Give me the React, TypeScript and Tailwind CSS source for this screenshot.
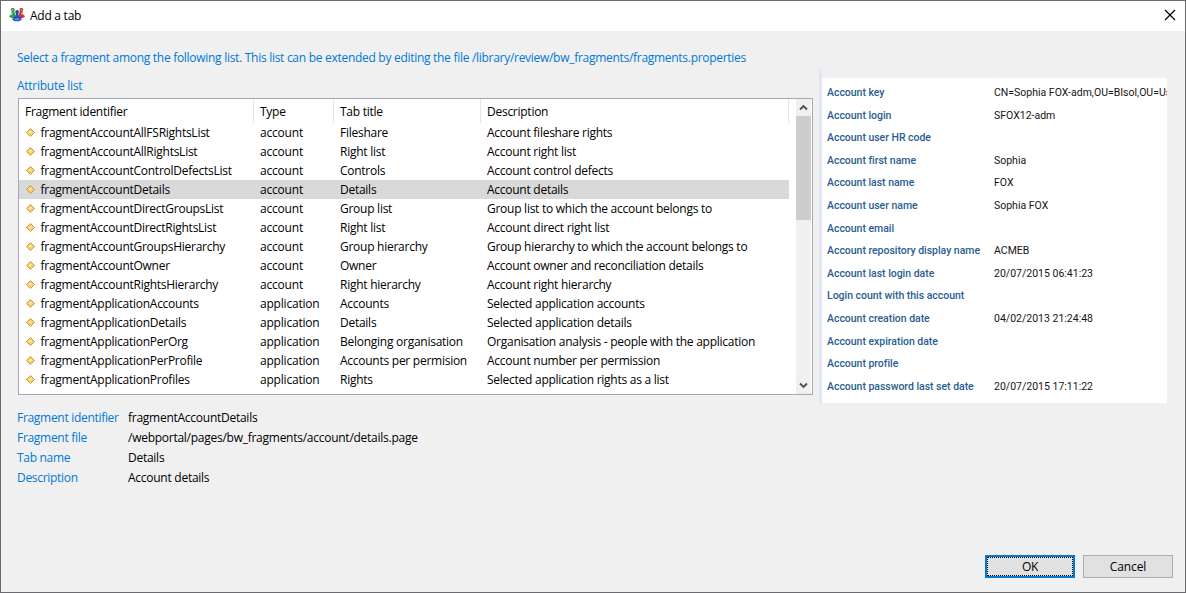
import React from "react";

type Fragment = { id: string; type: string; title: string; description: string };

const fragments: Fragment[] = [
  { id: "fragmentAccountAllFSRightsList", type: "account", title: "Fileshare", description: "Account fileshare rights" },
  { id: "fragmentAccountAllRightsList", type: "account", title: "Right list", description: "Account right list" },
  { id: "fragmentAccountControlDefectsList", type: "account", title: "Controls", description: "Account control defects" },
  { id: "fragmentAccountDetails", type: "account", title: "Details", description: "Account details" },
  { id: "fragmentAccountDirectGroupsList", type: "account", title: "Group list", description: "Group list to which the account belongs to" },
  { id: "fragmentAccountDirectRightsList", type: "account", title: "Right list", description: "Account direct right list" },
  { id: "fragmentAccountGroupsHierarchy", type: "account", title: "Group hierarchy", description: "Group hierarchy to which the account belongs to" },
  { id: "fragmentAccountOwner", type: "account", title: "Owner", description: "Account owner and reconciliation details" },
  { id: "fragmentAccountRightsHierarchy", type: "account", title: "Right hierarchy", description: "Account right hierarchy" },
  { id: "fragmentApplicationAccounts", type: "application", title: "Accounts", description: "Selected application accounts" },
  { id: "fragmentApplicationDetails", type: "application", title: "Details", description: "Selected application details" },
  { id: "fragmentApplicationPerOrg", type: "application", title: "Belonging organisation", description: "Organisation analysis - people with the application" },
  { id: "fragmentApplicationPerProfile", type: "application", title: "Accounts per permision", description: "Account number per permission" },
  { id: "fragmentApplicationProfiles", type: "application", title: "Rights", description: "Selected application rights as a list" },
];

const preview: [string, string][] = [
  ["Account key", "CN=Sophia FOX-adm,OU=BIsol,OU=Us"],
  ["Account login", "SFOX12-adm"],
  ["Account user HR code", ""],
  ["Account first name", "Sophia"],
  ["Account last name", "FOX"],
  ["Account user name", "Sophia FOX"],
  ["Account email", ""],
  ["Account repository display name", "ACMEB"],
  ["Account last login date", "20/07/2015 06:41:23"],
  ["Login count with this account", ""],
  ["Account creation date", "04/02/2013 21:24:48"],
  ["Account expiration date", ""],
  ["Account profile", ""],
  ["Account password last set date", "20/07/2015 17:11:22"],
];

const details: [string, string][] = [
  ["Fragment identifier", "fragmentAccountDetails"],
  ["Fragment file", "/webportal/pages/bw_fragments/account/details.page"],
  ["Tab name", "Details"],
  ["Description", "Account details"],
];

const columns = "grid grid-cols-[235px_80px_147px_308px]";

function AppIcon() {
  return (
    <svg width="16" height="16" viewBox="0 0 16 16" className="-mt-[2px] shrink-0">
      <path d="M2.6 4h2.6l.9 3.2.8 2.6c-1.6 1.8-5.6 1.6-6.9-.6l2.6-2.4z" fill="#23a63d" />
      <circle cx="3.8" cy="2.6" r="1.9" fill="#3b8f4c" />
      <path d="M3.6 2v1.6M3.6 5.5l-1.4 3" stroke="#8be394" strokeWidth="1" />
      <path d="M10.9 4h2.6l-.1 2.8L16 9.2c-1.3 2.2-5.3 2.4-6.9.6l.8-2.6z" fill="#d02e35" />
      <circle cx="12.3" cy="2.6" r="1.9" fill="#b8454a" />
      <path d="M12.2 2v1.6M12.2 5.5l1 3" stroke="#f58f8c" strokeWidth="1" />
      <path d="M7 5.8h2.2l.5 3.2 3 2.7c.2 3.5-9.6 3.5-9.4 0l3-2.7z" fill="#2450bd" />
      <circle cx="8.1" cy="4.8" r="1.9" fill="#33468a" />
      <path d="M4.6 12c1.5-1 5.2-1 6.8 0-1 1.8-5.7 1.8-6.8 0z" fill="#5e92ea" />
    </svg>
  );
}

function Diamond() {
  return (
    <svg width="9" height="9" viewBox="0 0 9 9" className="mr-[5px] shrink-0">
      <path d="M4.5.6 8.4 4.5 4.5 8.4.6 4.5z" fill="#fcd468" stroke="#b78a3a" strokeWidth=".9" />
      <path d="M3.5 3.5h2M2.5 4.5h3" stroke="#ffe9a6" strokeWidth="1" />
    </svg>
  );
}

function Chevron({ down = false }: { down?: boolean }) {
  return (
    <svg width="9" height="7" viewBox="0 0 9 7" className={down ? "rotate-180" : ""}>
      <path d="M1 5.5 4.5 2 8 5.5" fill="none" stroke="#505050" strokeWidth="1.9" />
    </svg>
  );
}

export default function App() {
  return (
    <div className="flex h-[593px] w-[1186px] flex-col overflow-hidden border border-[#6b6b6d] bg-[#f0f0f0] font-['Open_Sans','Noto_Sans',sans-serif] text-[12px] leading-[19px] tracking-[-0.26px] whitespace-nowrap text-black">
      <header className="flex h-[30px] shrink-0 items-center bg-white pr-[9px] pl-2">
        <AppIcon />
        <h1 className="-mt-px ml-[5px] flex-1">Add a tab</h1>
        <svg width="12" height="12" viewBox="0 0 12 12" className="-mt-[2px]">
          <path d="M1 1l10 10M11 1L1 11" stroke="#000" strokeWidth="1.2" />
        </svg>
      </header>

      <main className="flex flex-1 flex-col pl-4">
        <p className="mt-[17px] tracking-[-0.287px] text-[#0078d7]">
          Select a fragment among the following list. This list can be extended by editing the file /library/review/bw_fragments/fragments.properties
        </p>
        <div className="flex">
          <div className="mt-[9px] w-[796px] shrink-0">
            <h2 className="text-[#0078d7]">Attribute list</h2>
            <div className="mt-[3px] ml-px flex h-[297px] w-[795px] border border-[#a0aab9] bg-white">
              <div className="w-[777px]">
                <div className={`${columns} h-6`}>
                  {["Fragment identifier", "Type", "Tab title", "Description"].map((label) => (
                    <div key={label} className="flex h-6 items-center border-r border-[#e5e5e5] pl-[6px]">
                      {label}
                    </div>
                  ))}
                </div>
                {fragments.map((f) => (
                  <div
                    key={f.id}
                    className={`${columns} h-[19px] w-[770px] ${f.id === "fragmentAccountDetails" ? "bg-[#d9d9d9]" : ""}`}
                  >
                    <div className="flex items-center pl-[7px]">
                      <Diamond />
                      <span className="pl-[0.5px]">{f.id}</span>
                    </div>
                    <div className="pl-[6px] tracking-[-0.2px]">{f.type}</div>
                    <div className="pl-[6px]">{f.title}</div>
                    <div className="pl-[6px]">{f.description}</div>
                  </div>
                ))}
              </div>
              <div className="flex w-[15px] flex-col items-center bg-[#f0f0f0]">
                <div className="flex h-[17px] items-center">
                  <Chevron />
                </div>
                <div className="h-[104px] w-[15px] bg-[#cdcdcd]" />
                <div className="mt-auto flex h-[17px] items-center">
                  <Chevron down />
                </div>
              </div>
            </div>
          </div>

          <aside className="mt-[2px] ml-[6px] h-[335px] w-[348px] border-l-3 border-[#dfe8f2] pt-[9px]">
            <div className="h-[325px] overflow-hidden bg-white pt-[4px] pl-[5px] font-['Roboto',sans-serif] text-[10.5px] leading-[22.6px] tracking-normal">
              {preview.map(([label, value]) => (
                <div key={label} className="flex h-[22.6px]">
                  <div className="w-[167px] shrink-0 font-medium tracking-[-0.03px] text-[#2b5c8f]">{label}</div>
                  <div className="text-[#151515]">{value}</div>
                </div>
              ))}
            </div>
          </aside>
        </div>

        <dl className="mt-1 grid grid-cols-[111px_1fr] leading-5">
          {details.map(([label, value]) => (
            <React.Fragment key={label}>
              <dt className="tracking-[-0.3px] text-[#0078d7]">{label}</dt>
              <dd>{value}</dd>
            </React.Fragment>
          ))}
        </dl>

        <footer className="mt-auto mr-3 mb-[14px] flex justify-end gap-2">
          <button className="h-[23px] w-[90px] border-2 border-[#0078d7] bg-[#e1e1e1]">
            <span className="flex h-full items-center justify-center border border-dotted border-black">OK</span>
          </button>
          <button className="h-[23px] w-[90px] border border-[#adadad] bg-[#e1e1e1] tracking-[-0.1px]">Cancel</button>
        </footer>
      </main>
    </div>
  );
}
